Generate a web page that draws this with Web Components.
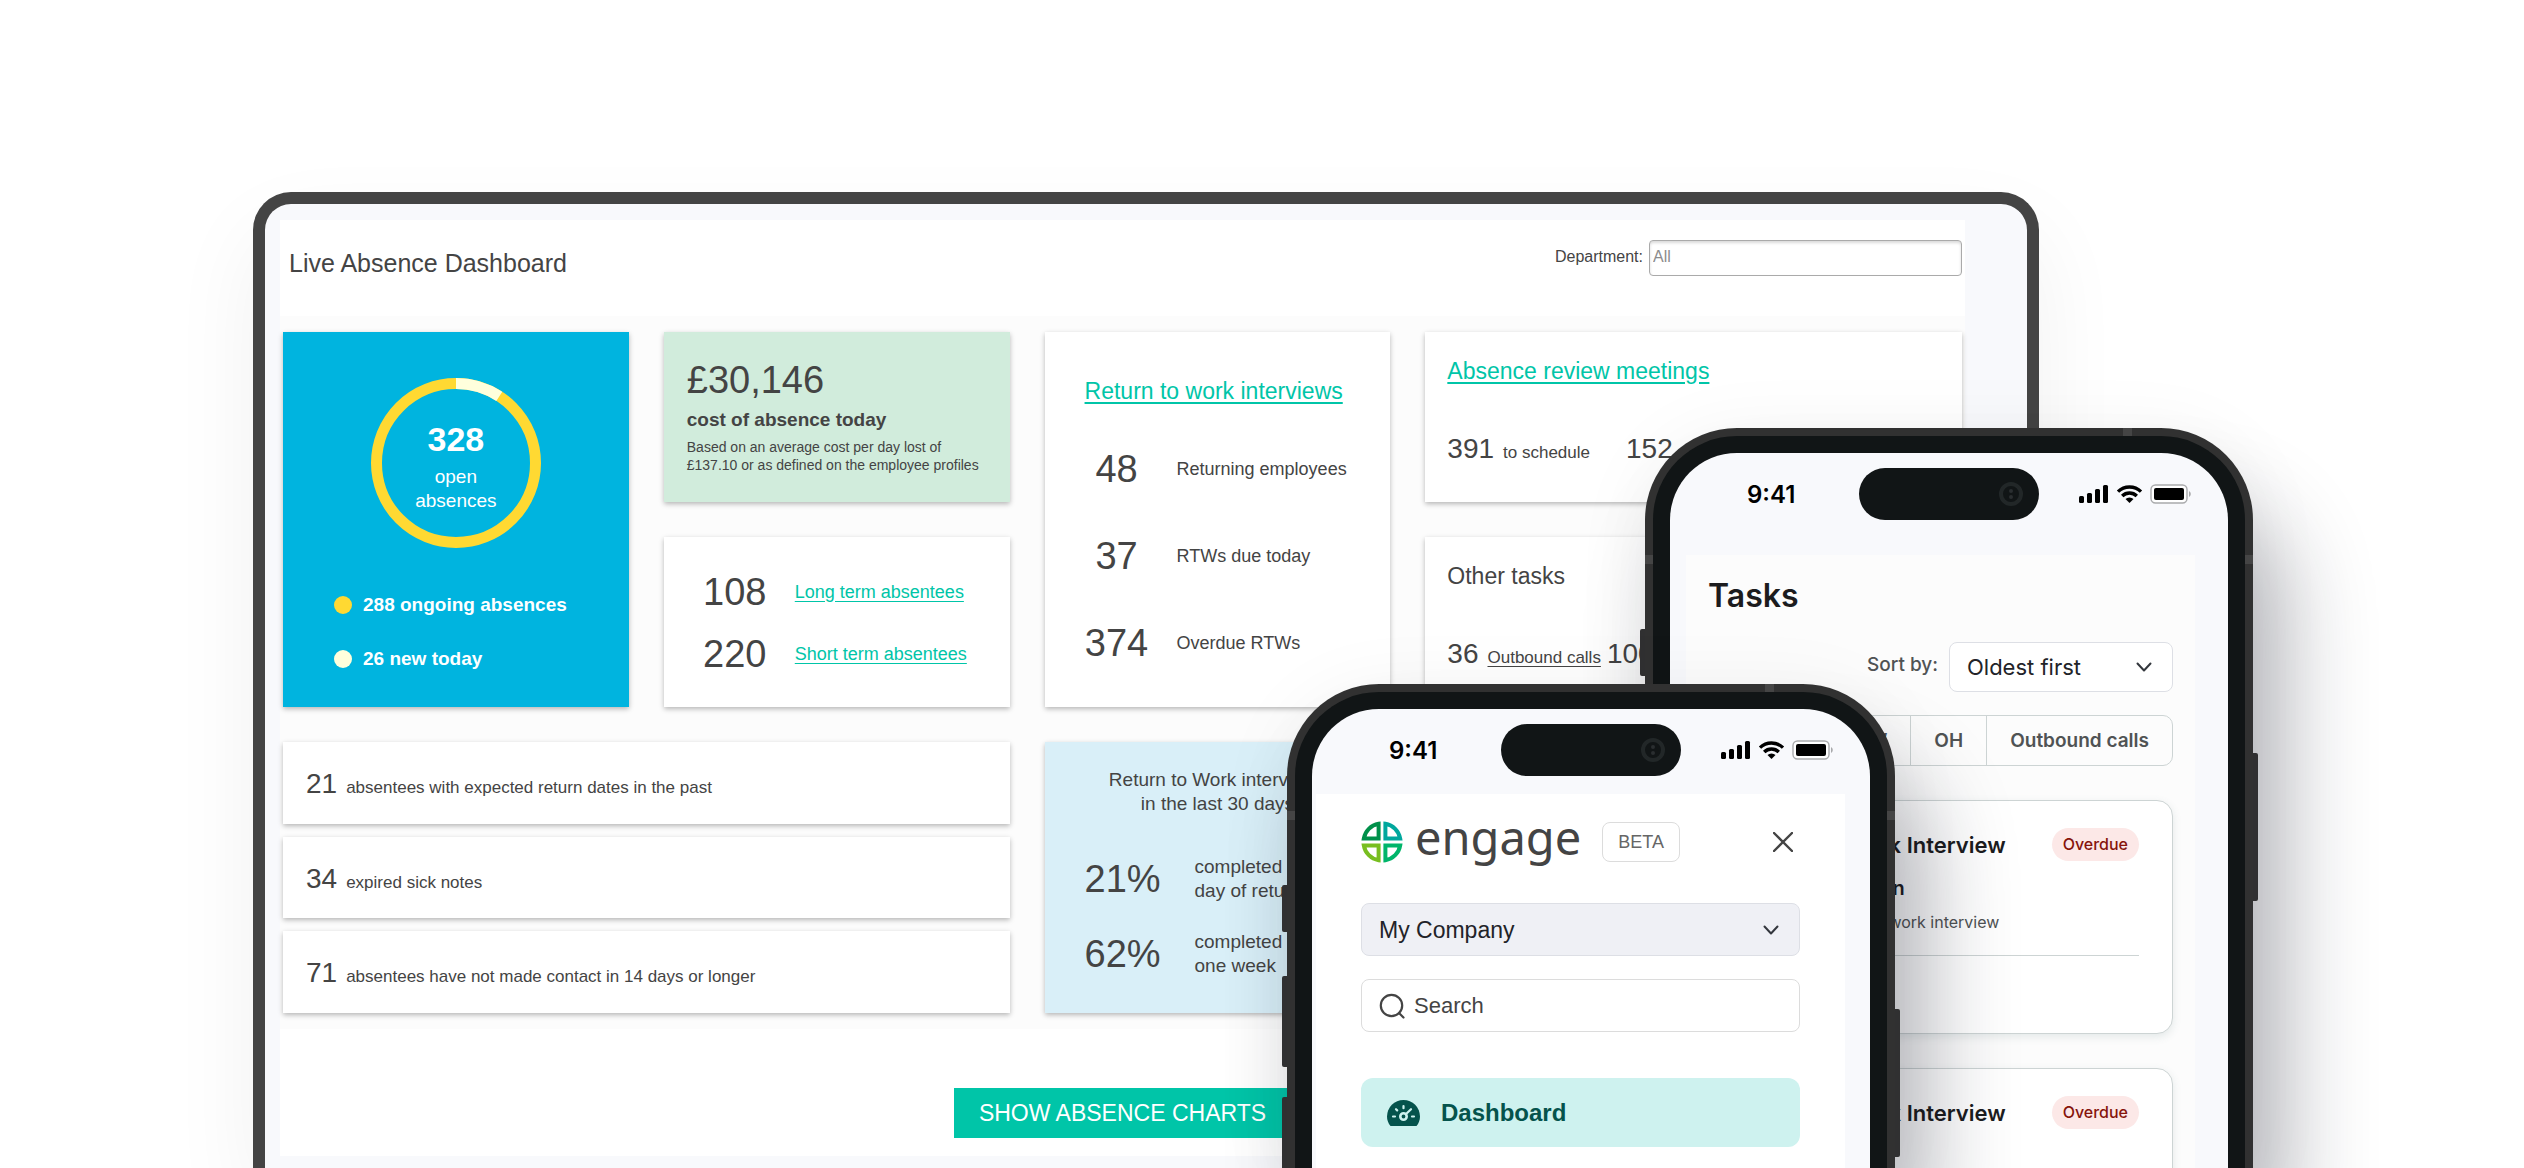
<!DOCTYPE html>
<html lang="en">
<head>
<meta charset="utf-8">
<title>Live Absence Dashboard</title>
<style>
    html, body {
        margin: 0;
        height: 100%;
    }
    body {
        background: #fff;
        color: #444;
        font-family: "Liberation Sans", Arial, sans-serif;
    }
</style>
</head>
<body>
<product-stage>
    <absence-laptop slot="laptop"></absence-laptop>
    <phone-frame slot="back" style="--content-inset: 30px 33px 0 16px; --content-bg: #fcfcfc">
        <tasks-screen></tasks-screen>
    </phone-frame>
    <phone-frame slot="front" style="--content-inset: 13px 25px 0 4px; --content-bg: #fff">
        <menu-screen></menu-screen>
    </phone-frame>
</product-stage>

<script>
class BaseElement extends HTMLElement {

    constructor(){
        super();
        this.shadowDOM = this.attachShadow({mode:"open"});
    }

    connectedCallback() {
        this.render();
    }
}

class ProductStage extends BaseElement {
    render() {
        this.shadowDOM.innerHTML = `
        <style>
            :host {
                display: flex;
                flex-direction: column;
                position: relative;
                box-sizing: border-box;
                min-height: 100%;
                padding: 192px 485px 0 253px;
                overflow: hidden;
            }
            ::slotted([slot="laptop"]) {
                flex: 1;
            }
            ::slotted([slot="back"]), ::slotted([slot="front"]) {
                position: absolute;
                bottom: 0;
            }
            ::slotted([slot="back"]) {
                top: 428px;
                left: calc(50% + 383px);
            }
            ::slotted([slot="front"]) {
                top: 684px;
                left: calc(50% + 25px);
            }
        </style>
        <slot name="laptop"></slot>
        <slot name="back"></slot>
        <slot name="front"></slot>
        `;
    }
}

class AbsenceLaptop extends BaseElement {
    render() {
        this.shadowDOM.innerHTML = `
        <style>
            :host {
                display: block;
                box-sizing: border-box;
                padding: 16px 62px 0 15px;
                background: #f8f9fc;
                border: 12px solid #444;
                border-bottom: 0;
                border-radius: 38px 38px 0 0;
                box-shadow: 0 40px 90px rgba(0, 0, 0, 0.06);
            }
            .panel {
                background: #fff;
            }
            header {
                display: flex;
                justify-content: space-between;
                height: 96px;
                padding: 0 3px 0 9px;
            }
            h1 {
                margin: 28px 0 0;
                font-size: 25px;
                line-height: 30px;
                font-weight: normal;
            }
            .filter {
                display: flex;
                align-items: center;
                gap: 6px;
                height: 36px;
                margin-top: 20px;
                font-size: 16px;
            }
            .filter label {
                padding-bottom: 2px;
            }
            .filter input {
                box-sizing: border-box;
                width: 313px;
                height: 36px;
                padding: 0 3px 2px;
                border: 1px solid #aaa;
                border-radius: 4px;
                box-shadow: inset 0 2px 3px rgba(0, 0, 0, 0.15);
                font: inherit;
                background: #fff;
            }
            .filter input::placeholder {
                color: #8c8c8c;
            }
            .board {
                display: grid;
                grid-template-columns: 346fr 346fr 346fr 537fr;
                grid-template-rows: minmax(170px, auto) minmax(170px, auto) auto;
                gap: 35px;
                padding: 16px 3px;
                background: #fcfcfc;
            }
            .tall {
                grid-row: span 2;
            }
            .notes {
                grid-column: span 2;
                display: flex;
                flex-direction: column;
                gap: 13px;
            }
            .notes panel-card {
                flex: 1;
                padding: 25px 23px 0;
            }
            h2 {
                margin: 0;
                font-size: 23px;
                line-height: 30px;
                font-weight: normal;
            }
            a {
                color: #00c5a8;
                text-underline-offset: 3px;
            }
            .list {
                padding-left: 40px;
            }
            .list h2 {
                margin: 44px 0 20px;
            }
            .term {
                padding: 24px 0 0 39px;
            }
            .side {
                padding: 24px 22px 0;
            }
            .side .line {
                display: flex;
                margin-top: 46px;
            }
            .cost {
                padding: 26px 23px 0;
                --card-bg: #d1ecdc;
            }
            .cost p {
                margin: 0 0 6px;
            }
            .cost .sum {
                font-size: 38px;
                line-height: 44px;
            }
            .cost .what {
                font-size: 19px;
                line-height: 24px;
                font-weight: bold;
            }
            .cost .why {
                font-size: 14px;
                line-height: 18px;
            }
            .rate {
                --card-bg: #d9eff8;
                padding: 26px 0 35px;
                font-size: 19px;
                line-height: 24px;
            }
            .rate .head {
                margin: 0 0 39px;
                text-align: center;
            }
            .rate .line {
                display: flex;
                align-items: center;
                gap: 34px;
                padding-left: 40px;
            }
            .rate .line + .line {
                margin-top: 27px;
            }
            .rate .line b {
                width: 76px;
                font-size: 38px;
                font-weight: normal;
            }
            footer {
                display: flex;
                justify-content: center;
                padding: 59px 0 18px;
            }
            button {
                height: 50px;
                padding: 0 25px;
                border: 0;
                background: #00c5a8;
                color: #fff;
                font: 23px "Liberation Sans", Arial, sans-serif;
            }
        </style>
        <div class="panel">
            <header>
                <h1>Live Absence Dashboard</h1>
                <div class="filter">
                    <label for="department">Department:</label>
                    <input id="department" type="text" placeholder="All">
                </div>
            </header>
            <div class="board">
                <absence-donut class="tall"></absence-donut>
                <panel-card class="cost">
                    <p class="sum">£30,146</p>
                    <p class="what">cost of absence today</p>
                    <p class="why">Based on an average cost per day lost of<br>£137.10 or as defined on the employee profiles</p>
                </panel-card>
                <panel-card class="list tall">
                    <h2><a href="#interviews">Return to work interviews</a></h2>
                    <count-row value="48" style="--row: 87px">Returning employees</count-row>
                    <count-row value="37" style="--row: 87px">RTWs due today</count-row>
                    <count-row value="374" style="--row: 87px">Overdue RTWs</count-row>
                </panel-card>
                <panel-card class="side">
                    <h2><a href="#meetings">Absence review meetings</a></h2>
                    <div class="line" style="gap: 36px">
                        <inline-count value="391">to schedule</inline-count>
                        <inline-count value="152"></inline-count>
                    </div>
                </panel-card>
                <panel-card class="term">
                    <count-row value="108" style="--row: 62px"><a href="#long">Long term absentees</a></count-row>
                    <count-row value="220" style="--row: 62px"><a href="#short">Short term absentees</a></count-row>
                </panel-card>
                <panel-card class="side">
                    <h2>Other tasks</h2>
                    <div class="line" style="gap: 6px">
                        <inline-count value="36"><a href="#calls" style="color: inherit">Outbound calls</a></inline-count>
                        <inline-count value="100"></inline-count>
                    </div>
                </panel-card>
                <div class="notes">
                    <panel-card><inline-count value="21">absentees with expected return dates in the past</inline-count></panel-card>
                    <panel-card><inline-count value="34">expired sick notes</inline-count></panel-card>
                    <panel-card><inline-count value="71">absentees have not made contact in 14 days or longer</inline-count></panel-card>
                </div>
                <panel-card class="rate">
                    <p class="head">Return to Work interviews<br>in the last 30 days</p>
                    <div class="line"><b>21%</b><span>completed on<br>day of return</span></div>
                    <div class="line"><b>62%</b><span>completed within<br>one week</span></div>
                </panel-card>
            </div>
            <footer><button type="button">SHOW ABSENCE CHARTS</button></footer>
        </div>
        `;
    }
}

class PanelCard extends BaseElement {
    render() {
        this.shadowDOM.innerHTML = `
        <style>
            :host {
                display: block;
                background: var(--card-bg, #fff);
                box-shadow: 0 2px 5px rgba(0, 0, 0, 0.28);
            }
        </style>
        <slot></slot>
        `;
    }
}

class CountRow extends BaseElement {
    render() {
        this.shadowDOM.innerHTML = `
        <style>
            :host {
                display: flex;
                align-items: center;
                gap: 28px;
                height: var(--row);
                font-size: 18px;
            }
            .value {
                width: 64px;
                font-size: 38px;
                text-align: center;
            }
        </style>
        <span class="value">${this.getAttribute("value")}</span>
        <slot></slot>
        `;
    }
}

class InlineCount extends BaseElement {
    render() {
        this.shadowDOM.innerHTML = `
        <style>
            :host {
                display: flex;
                align-items: baseline;
                gap: 9px;
                font-size: 17px;
                line-height: 34px;
            }
            .value {
                font-size: 28px;
            }
        </style>
        <span class="value">${this.getAttribute("value")}</span>
        <slot></slot>
        `;
    }
}

class AbsenceDonut extends BaseElement {
    render() {
        this.shadowDOM.innerHTML = `
        <style>
            :host {
                display: block;
                padding-top: 46px;
                background: #00b4df;
                color: #fff;
                box-shadow: 0 2px 5px rgba(0, 0, 0, 0.28);
            }
            .chart {
                display: grid;
                justify-items: center;
                align-items: center;
            }
            .chart > * {
                grid-area: 1 / 1;
            }
            .total {
                padding-top: 6px;
                font-size: 19px;
                line-height: 24px;
                text-align: center;
            }
            .total strong {
                display: block;
                margin-bottom: 6px;
                font-size: 34px;
                line-height: 40px;
            }
            ul {
                display: flex;
                flex-direction: column;
                gap: 32px;
                margin: 46px 0 0;
                padding: 0 0 0 51px;
                list-style: none;
                font-size: 19px;
                line-height: 22px;
                font-weight: bold;
            }
            li {
                display: flex;
                align-items: center;
                gap: 11px;
            }
            li::before {
                content: "";
                width: 18px;
                height: 18px;
                border-radius: 50%;
                background: var(--dot);
            }
        </style>
        <div class="chart">
            <svg width="170" height="170" viewBox="0 0 170 170" fill="none" stroke-width="11">
                <circle cx="85" cy="85" r="79.5" stroke="#ffd932"/>
                <path d="M85 5.5A79.5 79.5 0 0 1 128.3 18.3" stroke="#ffffdc"/>
            </svg>
            <div class="total"><strong>328</strong>open<br>absences</div>
        </div>
        <ul>
            <li style="--dot: #ffd932">288 ongoing absences</li>
            <li style="--dot: #ffffdc">26 new today</li>
        </ul>
        `;
    }
}

class PhoneFrame extends BaseElement {
    render() {
        this.shadowDOM.innerHTML = `
        <style>
            :host {
                display: flex;
                box-sizing: border-box;
                width: 608px;
                padding: 8px 8px 0;
                background: #313131;
                border-radius: 92px 92px 0 0;
                box-shadow: 32px 80px 90px rgba(20, 22, 40, 0.3), 0 10px 80px rgba(0, 0, 0, 0.06);
            }
            .bezel {
                flex: 1;
                display: flex;
                padding: 17px 17px 0;
                background: #111516;
                border-radius: 84px 84px 0 0;
                overflow: hidden;
            }
            .screen {
                flex: 1;
                min-width: 0;
                display: flex;
                flex-direction: column;
                padding-top: 15px;
                background: #f8f9fc;
                border-radius: 67px 67px 0 0;
                overflow: hidden;
                color: #000;
            }
            .status {
                display: grid;
                grid-template-columns: 1fr 180px 1fr;
                align-items: center;
                padding-bottom: 5px;
            }
            .time {
                padding-left: 77px;
                font: 600 24px Inter, sans-serif;
            }
            .island {
                display: flex;
                align-items: center;
                justify-content: flex-end;
                height: 52px;
                padding-right: 16px;
                box-sizing: border-box;
                border-radius: 26px;
                background: #111516;
            }
            .signal {
                padding-left: 40px;
            }
            .content {
                flex: 1;
                min-height: 0;
                margin: var(--content-inset);
                background: var(--content-bg);
                overflow: hidden;
            }
            /* side keys and antenna bands sit over the metal edge */
            .key, .band {
                position: absolute;
                background: #303031;
            }
            .key {
                width: 5px;
                left: -5px;
                border-radius: 2px 0 0 2px;
            }
            .power {
                left: auto;
                right: -5px;
                border-radius: 0 2px 2px 0;
            }
            .band {
                background: #454545;
            }
        </style>
        <div class="bezel">
            <div class="screen">
                <div class="status">
                    <span class="time">9:41</span>
                    <span class="island">
                        <svg width="24" height="24" viewBox="0 0 24 24"><circle cx="12" cy="12" r="10" fill="none" stroke="#222728" stroke-width="4"/><circle cx="12" cy="9" r="2" fill="#2a2e30"/><circle cx="12" cy="15" r="2" fill="#2a2e30"/></svg>
                    </span>
                    <span class="signal">
                        <svg width="114" height="20" viewBox="0 0 114 20" style="display: block">
                            <rect x="0" y="12" width="5" height="7" rx="1.5"/>
                            <rect x="8" y="9" width="5" height="10" rx="1.5"/>
                            <rect x="16" y="5" width="5" height="14" rx="1.5"/>
                            <rect x="24" y="1" width="5" height="18" rx="1.5"/>
                            <g fill="none" stroke="#000" stroke-width="3.4">
                                <path d="M39 7.6a16.5 16.5 0 0 1 23 0"/>
                                <path d="M43.2 12a10.4 10.4 0 0 1 14.6 0"/>
                            </g>
                            <path d="M50.5 19l-4-4a5.8 5.8 0 0 1 8 0z"/>
                            <rect x="72" y="1" width="36" height="18" rx="4.5" fill="#fff" stroke="#a9aaac" stroke-width="1.4"/>
                            <rect x="75" y="4" width="30" height="12" rx="2"/>
                            <path d="M110 7v6a3.4 3.4 0 0 0 0-6z" fill="#a9aaac"/>
                        </svg>
                    </span>
                </div>
                <div class="content"><slot></slot></div>
            </div>
        </div>
        <i class="key" style="top: 201px; height: 47px"></i>
        <i class="key" style="top: 292px; height: 91px"></i>
        <i class="key" style="top: 413px; height: 91px"></i>
        <i class="key power" style="top: 325px; height: 148px"></i>
        <i class="band" style="top: 0; right: 121px; width: 9px; height: 8px"></i>
        <i class="band" style="top: 127px; left: 0; width: 8px; height: 9px"></i>
        <i class="band" style="top: 127px; right: 0; width: 8px; height: 9px"></i>
        `;
    }
}

/* drop-down with its own chevron */
class PickList extends BaseElement {
    render() {
        this.shadowDOM.innerHTML = `
        <style>
            :host {
                display: grid;
                align-items: center;
            }
            select, svg {
                grid-area: 1 / 1;
            }
            select {
                appearance: none;
                box-sizing: border-box;
                width: 100%;
                height: var(--height, 50px);
                padding: 0 17px;
                border: 1px solid #dddfe5;
                border-radius: 8px;
                background: var(--field, #fff);
                color: #222328;
                font: inherit;
            }
            svg {
                justify-self: end;
                margin-right: 20px;
                pointer-events: none;
            }
        </style>
        <select aria-label="${this.getAttribute("label")}"><option>${this.getAttribute("value")}</option></select>
        <svg width="18" height="12" viewBox="0 0 18 12" fill="none" stroke="#33373d" stroke-width="2" stroke-linecap="round" stroke-linejoin="round"><path d="M2.5 2.5L9 9.5l6.5-7"/></svg>
        `;
    }
}

class TasksScreen extends BaseElement {
    render() {
        this.shadowDOM.innerHTML = `
        <style>
            :host {
                display: flex;
                flex-direction: column;
                padding: 21px 22px 0;
                font-family: Inter, sans-serif;
                color: #505354;
            }
            h1 {
                margin: 0 0 26px;
                font-size: 32px;
                line-height: 40px;
                font-weight: 600;
                color: #1c1c1e;
            }
            .sort {
                display: flex;
                justify-content: flex-end;
                align-items: center;
                gap: 11px;
                font-size: 19px;
                font-weight: 500;
            }
            .sort span {
                padding-bottom: 5px;
            }
            pick-list {
                width: 224px;
                font-size: 22px;
                font-weight: 400;
            }
            .tabs {
                display: flex;
                align-self: flex-end;
                margin: 23px 0 34px;
                border: 1px solid #cdd4d4;
                border-radius: 10px;
            }
            .tabs button {
                height: 49px;
                padding: 0 23px;
                border: 0;
                border-left: 1px solid #cdd4d4;
                background: none;
                color: inherit;
                font: 600 19px Inter, sans-serif;
            }
            .tabs button:first-child {
                border-left: 0;
            }
            task-card + task-card {
                margin-top: 34px;
            }
        </style>
        <h1>Tasks</h1>
        <div class="sort">
            <span>Sort by:</span>
            <pick-list label="Sort by" value="Oldest first"></pick-list>
        </div>
        <div class="tabs">
            <button type="button">RTW</button>
            <button type="button">OH</button>
            <button type="button">Outbound calls</button>
        </div>
        <task-card name="Jordan Robinson" note="Complete return to work interview"></task-card>
        <task-card></task-card>
        `;
    }
}

class TaskCard extends BaseElement {
    render() {
        const name = this.getAttribute("name");
        this.shadowDOM.innerHTML = `
        <style>
            :host {
                display: block;
                padding: 27px 33px 77px;
                background: #fff;
                border: 1px solid #cdd4d4;
                border-radius: 16px;
                box-shadow: 0 3px 8px rgba(80, 110, 110, 0.14);
            }
            .top {
                display: flex;
                justify-content: space-between;
                align-items: center;
            }
            h3 {
                margin: 0;
                font-size: 22px;
                font-weight: 600;
                color: #1c1c1e;
            }
            .badge {
                padding: 0 11px;
                line-height: 33px;
                border-radius: 17px;
                background: #fce8e7;
                color: #86140c;
                font-size: 16px;
                font-weight: 500;
            }
            .name {
                margin: 13px 0 8px;
                font-size: 20px;
                line-height: 28px;
                font-weight: 600;
                color: #1c1c1e;
            }
            .note {
                margin: 0;
                padding-bottom: 21px;
                border-bottom: 1px solid #cdd4d4;
                font-size: 16px;
                line-height: 24px;
            }
        </style>
        <div class="top">
            <h3>Return to Work Interview</h3>
            <span class="badge">Overdue</span>
        </div>
        ${name ? `<p class="name">${name}</p>
        <p class="note">${this.getAttribute("note")}</p>` : ""}
        `;
    }
}

class MenuScreen extends BaseElement {
    render() {
        this.shadowDOM.innerHTML = `
        <style>
            :host {
                display: block;
                padding: 27px 45px 0;
                color: #444;
            }
            .brand {
                display: flex;
                align-items: center;
                height: 42px;
                margin-bottom: 40px;
            }
            .word {
                margin: 0 auto 0 12px;
                padding-bottom: 10px;
                font: 400 47px "Noto Sans", sans-serif;
            }
            .beta {
                padding: 0 15px;
                line-height: 38px;
                border: 1px solid #dcdcdc;
                border-radius: 8px;
                font-size: 18px;
                color: #666;
            }
            .close {
                margin: 0 0 0 86px;
                padding: 7px;
                border: 0;
                background: none;
                line-height: 0;
            }
            pick-list {
                --height: 53px;
                --field: #eff0f5;
                font-size: 23px;
            }
            .search {
                display: flex;
                align-items: center;
                gap: 9px;
                height: 51px;
                margin: 23px 0 46px;
                padding: 0 17px;
                border: 1px solid #dcdcdc;
                border-radius: 8px;
            }
            .search input {
                flex: 1;
                min-width: 0;
                padding: 0;
                border: 0;
                outline: 0;
                font: 22px "Liberation Sans", Arial, sans-serif;
            }
            .search input::placeholder {
                color: #444;
            }
            .item {
                display: flex;
                align-items: center;
                gap: 21px;
                height: 69px;
                padding: 0 26px;
                border-radius: 12px;
                background: #cef2ef;
                color: #05534c;
                font-size: 24px;
                font-weight: bold;
                text-decoration: none;
            }
        </style>
        <div class="brand">
            <svg width="42" height="42" viewBox="0 0 42 42" fill="none" stroke-width="4">
                <path d="M17.6 2.8V17.6H2.8A18 18 0 0 1 17.6 2.8z" stroke="#00904a"/>
                <path d="M24.4 2.8V17.6H39.2A18 18 0 0 0 24.4 2.8z" stroke="#00a79d"/>
                <path d="M17.6 39.2V24.4H2.8A18 18 0 0 0 17.6 39.2z" stroke="#78be20"/>
                <path d="M24.4 39.2V24.4H39.2A18 18 0 0 1 24.4 39.2z" stroke="#00b56a"/>
            </svg>
            <span class="word">engage</span>
            <span class="beta">BETA</span>
            <button class="close" type="button" aria-label="Close">
                <svg width="20" height="20" viewBox="0 0 20 20" stroke="#444" stroke-width="2.4" stroke-linecap="round"><path d="M1 1l18 18M19 1L1 19"/></svg>
            </button>
        </div>
        <pick-list label="Company" value="My Company"></pick-list>
        <label class="search">
            <svg width="26" height="26" viewBox="0 0 26 26" fill="none" stroke="#444" stroke-width="2.2" stroke-linecap="round"><circle cx="12.5" cy="12.5" r="10.7"/><path d="M20 20l4.5 4.5"/></svg>
            <input type="search" placeholder="Search" aria-label="Search">
        </label>
        <a class="item" href="#dashboard">
            <svg width="33" height="26" viewBox="0 0 33 26">
                <path d="M3.5 26C1.3 23.4 0 20.1 0 16.5a16.5 16.5 0 0 1 33 0c0 3.6-1.3 6.9-3.5 9.5z" fill="#05534c"/>
                <g fill="none" stroke="#cef2ef" stroke-width="2.2" stroke-linecap="round">
                    <path d="M6 16.5h2M25 16.5h2M9 9.2l1.2 1.2M16.5 6v2.2M24 9.2l-5 4.8"/>
                    <circle cx="16.5" cy="16.5" r="3.2" stroke-width="2.6"/>
                </g>
            </svg>
            <span>Dashboard</span>
        </a>
        `;
    }
}

customElements.define("panel-card", PanelCard);
customElements.define("count-row", CountRow);
customElements.define("inline-count", InlineCount);
customElements.define("absence-donut", AbsenceDonut);
customElements.define("pick-list", PickList);
customElements.define("task-card", TaskCard);
customElements.define("tasks-screen", TasksScreen);
customElements.define("menu-screen", MenuScreen);
customElements.define("phone-frame", PhoneFrame);
customElements.define("absence-laptop", AbsenceLaptop);
customElements.define("product-stage", ProductStage);
</script>
</body>
</html>
